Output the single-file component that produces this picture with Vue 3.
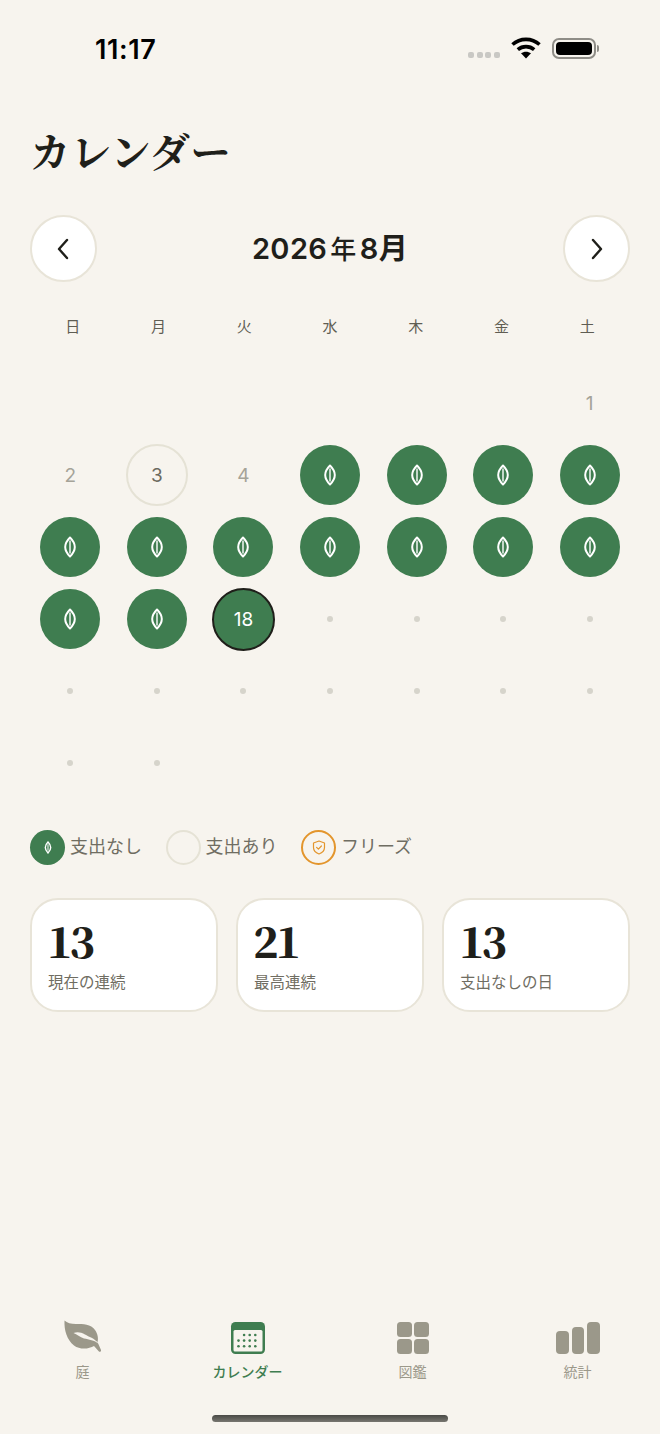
<script setup>
const weekdays = ['日', '月', '火', '水', '木', '金', '土']

// 2026年8月: 土曜始まり
const cells = []
for (let i = 0; i < 6; i++) cells.push({ id: 'blank' + i, type: 'blank' })
for (let d = 1; d <= 31; d++) {
  let type = 'dot'
  if (d <= 2 || d === 4) type = 'past'
  else if (d === 3) type = 'spent'
  else if (d <= 17) type = 'leaf'
  else if (d === 18) type = 'today'
  cells.push({ id: d, day: d, type })
}

const stats = [
  { value: 13, label: '現在の連続' },
  { value: 21, label: '最高連続' },
  { value: 13, label: '支出なしの日' }
]

const calendarDots = []
for (let r = 0; r < 3; r++) {
  for (let c = 0; c < 4; c++) {
    if (r === 0 && c === 0) continue
    calendarDots.push({ x: 8.5 + c * 5.6, y: 14 + r * 5.6 })
  }
}
</script>

<template>
  <div class="page">
    <div class="status">
      <span class="time">11:17</span>
      <div class="status-icons">
        <div class="signal"><i></i><i></i><i></i><i></i></div>
        <svg class="wifi" width="30" height="22" viewBox="0 0 30 22">
          <path d="M1.500 7.500C9 .6 21 .6 28.500 7.500" fill="none" stroke="#000" stroke-width="3.600" />
          <path d="M6.800 12.600c4.600-4 11.800-4 16.400 0" fill="none" stroke="#000" stroke-width="3.600" />
          <path d="M15 21.500l-5-5.200c2.800-2.200 7.200-2.200 10 0z" fill="#000" />
        </svg>
        <div class="battery"><div class="battery-fill"></div></div>
        <div class="battery-cap"></div>
      </div>
    </div>

    <h1 class="title">カレンダー</h1>

    <div class="month-nav">
      <button class="nav-btn">
        <svg width="14" height="22" viewBox="0 0 14 22"><path d="M10 2L2 11l8 9" fill="none" stroke="#1f1f1a" stroke-width="2.400" stroke-linecap="round" stroke-linejoin="round" /></svg>
      </button>
      <div class="month-label">2026<span class="thin">年</span>8月</div>
      <button class="nav-btn">
        <svg width="14" height="22" viewBox="0 0 14 22"><path d="M4 2l8 9-8 9" fill="none" stroke="#1f1f1a" stroke-width="2.400" stroke-linecap="round" stroke-linejoin="round" /></svg>
      </button>
    </div>

    <div class="weekdays">
      <div v-for="w in weekdays" :key="w" class="weekday">{{ w }}</div>
    </div>

    <div class="grid">
      <div v-for="cell in cells" :key="cell.id" class="cell">
        <span v-if="cell.type === 'past'" class="num">{{ cell.day }}</span>
        <div v-else-if="cell.type === 'spent'" class="circle spent">{{ cell.day }}</div>
        <div v-else-if="cell.type === 'leaf'" class="circle done">
          <svg width="14" height="24" viewBox="0 0 14 24">
            <path d="M7 2.500C4 5.500 2.200 9 2.200 12s1.800 6.500 4.800 9.500c3-3 4.800-6.500 4.800-9.500S10 5.500 7 2.500z" fill="none" stroke="#fff" stroke-width="2" stroke-linejoin="round" />
            <path d="M7 6V18" stroke="#fff" stroke-width="1.400" stroke-linecap="round" />
          </svg>
        </div>
        <div v-else-if="cell.type === 'today'" class="circle today">{{ cell.day }}</div>
        <span v-else-if="cell.type === 'dot'" class="dot"></span>
      </div>
    </div>

    <div class="legend">
      <div class="legend-item">
        <span class="swatch swatch-done">
          <svg width="8" height="13" viewBox="0 0 14 24">
            <path d="M7 2C3.600 5.400 2 9 2 12s1.600 6.600 5 10c3.400-3.400 5-7 5-10S10.400 5.400 7 2z" fill="none" stroke="#fff" stroke-width="2.600" />
            <path d="M7 6V18" stroke="#fff" stroke-width="1.800" />
          </svg>
        </span>
        <span>支出なし</span>
      </div>
      <div class="legend-item">
        <span class="swatch swatch-spent"></span>
        <span>支出あり</span>
      </div>
      <div class="legend-item">
        <span class="swatch swatch-freeze">
          <svg width="14" height="15" viewBox="0 0 14 15">
            <path d="M7 1l5.500 2v4.500c0 3-2.200 5.200-5.500 6.500-3.300-1.300-5.500-3.500-5.500-6.500V3z" fill="none" stroke="#e3952c" stroke-width="1.200" stroke-linejoin="round" />
            <path d="M4.600 7.400l1.800 1.800 3-3.200" fill="none" stroke="#e3952c" stroke-width="1.200" stroke-linecap="round" stroke-linejoin="round" />
          </svg>
        </span>
        <span>フリーズ</span>
      </div>
    </div>

    <div class="stats">
      <div v-for="s in stats" :key="s.label" class="stat-card">
        <div class="stat-value">{{ s.value }}</div>
        <div class="stat-label">{{ s.label }}</div>
      </div>
    </div>

    <nav class="tabs">
      <div class="tab">
        <svg width="40" height="36" viewBox="0 0 40 36">
          <path d="M1.500 1.500C4 4 8 5 13 5c7 0 15 0 19 6 3 4 3.500 9 2.500 12l3.500 8c.5 1.500-1.300 2.500-2.300 1.300L31 27c-5 3-14 4-20-.5C4 21 1 11 1.500 1.500z" fill="#9b988a" />
          <path d="M10.500 14c3.500-1.500 7.500-1 11.500 1.500 4 2.500 9 3 14 9.500-5-4-10-4.500-15-5.500-4-1-7-4.500-10.500-5.500z" fill="#f7f4ee" />
        </svg>
        <span>庭</span>
      </div>
      <div class="tab active">
        <svg width="36" height="34" viewBox="0 0 36 34">
          <rect x="1" y="1" width="34" height="32" rx="4.500" fill="#3f7d50" />
          <rect x="3.500" y="9" width="29" height="21.500" rx="1.500" fill="#f7f4ee" />
          <circle v-for="(d, i) in calendarDots" :key="i" :cx="d.x" :cy="d.y" r="1.300" fill="#3f7d50" />
        </svg>
        <span>カレンダー</span>
      </div>
      <div class="tab">
        <svg width="36" height="34" viewBox="0 0 36 34">
          <rect x="2" y="1" width="15" height="15" rx="3.500" fill="#9b988a" />
          <rect x="19" y="1" width="15" height="15" rx="3.500" fill="#9b988a" />
          <rect x="2" y="18" width="15" height="15" rx="3.500" fill="#9b988a" />
          <rect x="19" y="18" width="15" height="15" rx="3.500" fill="#9b988a" />
        </svg>
        <span>図鑑</span>
      </div>
      <div class="tab">
        <svg width="46" height="34" viewBox="0 0 46 34">
          <rect x="1" y="10" width="13" height="23" rx="4" fill="#9b988a" />
          <rect x="17" y="6" width="12" height="27" rx="4" fill="#9b988a" />
          <rect x="32" y="1" width="13" height="32" rx="4" fill="#9b988a" />
        </svg>
        <span>統計</span>
      </div>
    </nav>

    <div class="home-wrap"><div class="home-bar"></div></div>
  </div>
</template>

<style>
html, body {
  margin: 0;
  background: #f7f4ee;
}
</style>

<style scoped>
.page {
  width: 660px;
  height: 1434px;
  display: flex;
  flex-direction: column;
  background: #f7f4ee;
  color: #1f1f1a;
  font-family: Inter, "Noto Sans CJK JP", sans-serif;
  overflow: hidden;
}

.status {
  height: 126px;
  flex: none;
  display: flex;
  justify-content: space-between;
  align-items: flex-start;
  padding: 34px 61px 0 95px;
  box-sizing: border-box;
}

.time {
  font-size: 27px;
  font-weight: 600;
  line-height: 32px;
  color: #000;
  letter-spacing: 0.6px;
}

.status-icons {
  display: flex;
  align-items: center;
  margin-top: 3px;
}

.signal {
  display: flex;
  gap: 2.700px;
  margin: 13px 11px 0 0;
}

.signal i {
  width: 6px;
  height: 6px;
  border-radius: 2px;
  background: #c9c8c4;
}

.wifi {
  margin-right: 11px;
}

.battery {
  width: 44px;
  height: 21px;
  box-sizing: border-box;
  border: 2px solid #8f8d87;
  border-radius: 7px;
  padding: 2px;
}

.battery-fill {
  height: 100%;
  background: #000;
  border-radius: 4px;
}

.battery-cap {
  width: 2px;
  height: 7px;
  margin-left: 1px;
  background: #8f8d87;
  border-radius: 0 2px 2px 0;
}

.title {
  margin: 0;
  padding-left: 30px;
  font-family: "Liberation Serif", "Noto Serif CJK JP", "Noto Sans CJK JP", serif;
  font-size: 40px;
  font-weight: 700;
  line-height: 56px;
  letter-spacing: 0.8px;
}

.month-nav {
  margin-top: 33px;
  padding: 0 30px;
  display: flex;
  align-items: center;
  justify-content: space-between;
}

.nav-btn {
  width: 67px;
  height: 67px;
  padding: 0;
  display: flex;
  align-items: center;
  justify-content: center;
  background: #fff;
  border: 2px solid #e8e4d8;
  border-radius: 50%;
}

.month-label {
  position: relative;
  top: 1px;
  font-size: 29px;
  font-weight: 600;
  line-height: 40px;
  letter-spacing: 0.4px;
}

.thin {
  margin: 0 3px;
  font-size: 26px;
  font-weight: 500;
}

.weekdays,
.grid {
  display: grid;
  grid-template-columns: repeat(7, 1fr);
}

.weekdays {
  margin-top: 33px;
  padding: 0 30px;
}

.weekday {
  text-align: center;
  font-size: 15px;
  line-height: 24px;
  color: #5f5d53;
}

.grid {
  margin-top: 28px;
  padding: 0 27px;
  grid-auto-rows: 72px;
}

.cell {
  display: flex;
  align-items: center;
  justify-content: center;
}

.num {
  font-size: 19px;
  color: #a5a398;
}

.circle {
  width: 60px;
  height: 60px;
  box-sizing: border-box;
  border-radius: 50%;
  display: flex;
  align-items: center;
  justify-content: center;
  font-size: 19px;
}

.spent {
  width: 62px;
  height: 62px;
  border: 2px solid #e5e2d5;
  color: #6b6a5f;
}

.done {
  background: #3f7d50;
}

.today {
  width: 63px;
  height: 63px;
  background: #3f7d50;
  border: 2.500px solid #1f1f1a;
  color: #fff;
}

.dot {
  width: 6px;
  height: 6px;
  border-radius: 50%;
  background: #d6d4cb;
}

.legend {
  margin-top: 30px;
  padding: 0 30px;
  display: flex;
  gap: 23.500px;
  font-size: 18px;
  line-height: 36px;
  color: #6f6d62;
}

.legend-item {
  display: flex;
  align-items: center;
  gap: 5px;
}

.swatch {
  width: 35px;
  height: 35px;
  box-sizing: border-box;
  border-radius: 50%;
  display: flex;
  align-items: center;
  justify-content: center;
}

.swatch-done {
  background: #3f7d50;
}

.swatch-spent {
  border: 2px solid #e5e2d5;
}

.swatch-freeze {
  border: 2.500px solid #e3952c;
}

.stats {
  margin-top: 33px;
  padding: 0 30px;
  display: flex;
  gap: 18px;
}

.stat-card {
  flex: 1;
  height: 114px;
  box-sizing: border-box;
  padding: 13px 15px 0;
  background: #fff;
  border: 2px solid #e8e4d8;
  border-radius: 28px;
}

.stat-value {
  font-family: "Noto Serif CJK JP", "Liberation Serif", serif;
  font-size: 42px;
  font-weight: 900;
  line-height: 54px;
  letter-spacing: -3px;
}

.stat-label {
  margin-top: 5px;
  padding-left: 1px;
  font-size: 15.500px;
  line-height: 22px;
  color: #6f6d62;
}

.tabs {
  margin-top: auto;
  margin-bottom: 10px;
  display: grid;
  grid-template-columns: repeat(4, 1fr);
}

.tab {
  height: 64px;
  display: flex;
  flex-direction: column;
  align-items: center;
  justify-content: flex-end;
  gap: 7px;
  font-size: 14px;
  line-height: 20px;
  color: #9b988a;
}

.tab.active {
  color: #3f7d50;
  font-weight: 500;
}

.home-wrap {
  height: 42px;
  display: flex;
  justify-content: center;
  padding-top: 23px;
  box-sizing: border-box;
}

.home-bar {
  width: 236px;
  height: 7px;
  border-radius: 4px;
  background: linear-gradient(#4a4a46, #777670);
}
</style>
